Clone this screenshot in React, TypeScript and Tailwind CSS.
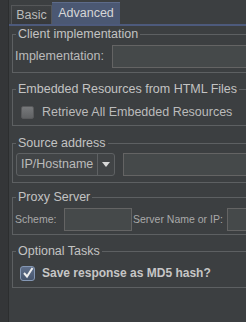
import React from "react";

function CheckBox({ checked }: { checked?: boolean }) {
  if (checked) {
    return (
      <span className="w-[15px] h-[15px] shrink-0 rounded-[3px] border border-[#8497b4] bg-linear-to-b from-[#5f6f8a] to-[#47556d] flex items-center justify-center">
        <svg width="12" height="12" viewBox="0 0 12 12">
          <path d="M2 6 L5 9.5 L10.5 1" stroke="#eeeeee" strokeWidth="2" fill="none" />
        </svg>
      </span>
    );
  }
  return (
    <span className="w-[13px] h-[13px] shrink-0 rounded-[2px] border border-[#58595b] bg-linear-to-b from-[#77797b] to-[#606264]" />
  );
}

function Group({ title, className, children }: { title: string; className?: string; children: React.ReactNode }) {
  return (
    <fieldset className={"ml-[3px] w-[262px] border border-[#5d6062] " + (className || "")}>
      <legend className="ml-[3px] px-[2px] text-[12.5px] leading-[15px] text-[#c3c3c3]">{title}</legend>
      {children}
    </fieldset>
  );
}

function Field({ className }: { className?: string }) {
  return <div className={"h-[23px] bg-[#45494a] border border-[#646464] " + (className || "")} />;
}

export default function App() {
  return (
    <div className="w-[246px] h-[322px] overflow-hidden bg-[#3c3f41] flex font-['Liberation_Sans',Arial,sans-serif]">
      <div className="w-[9px] shrink-0 bg-[#343638] border-r border-[#2c2e2f]" />
      <div className="flex-1 min-w-0 flex flex-col">
        {/* tabs */}
        <div className="h-[24px] flex items-end pl-[2px]">
          <div className="w-[41px] h-[19px] border border-b-0 border-[#555759] bg-linear-to-b from-[#3e4143] to-[#37393b] text-[12.5px] text-[#bbbbbb] flex items-center justify-center">
            Basic
          </div>
          <div className="w-[68px] h-[22px] bg-[#4b5873] border-t border-[#5d6b8a] text-[12.5px] text-[#d6d6d6] flex items-center justify-center">
            Advanced
          </div>
        </div>
        <div className="h-[2px] bg-[#4d5a7c]" />

        <Group title="Client implementation" className="mt-[1px]">
          <div className="flex items-center pt-[3px] pb-[4px] pl-[2px]">
            <span className="w-[97px] shrink-0 text-[12.5px] text-[#bbbbbb]">Implementation:</span>
            <Field className="flex-1" />
          </div>
        </Group>

        <Group title="Embedded Resources from HTML Files" className="mt-[9px]">
          <div className="h-[22px] mt-[4px] mb-[2px] pl-[8px] flex items-center gap-[8px]">
            <CheckBox />
            <span className="text-[12.5px] text-[#bbbbbb] whitespace-nowrap">Retrieve All Embedded Resources</span>
          </div>
        </Group>

        <Group title="Source address" className="mt-[10px]">
          <div className="flex items-center pt-[2px] pb-[6px] pl-[3px] gap-[8px]">
            <div className="w-[99px] h-[23px] shrink-0 flex border border-[#5e6163] rounded-[3px] bg-[#414446]">
              <span className="w-[80px] pl-[4px] text-[12.5px] leading-[21px] text-[#bbbbbb] whitespace-nowrap overflow-hidden">IP/Hostname</span>
              <span className="flex-1 border-l border-[#5e6163] flex items-center justify-center">
                <svg width="8" height="5" viewBox="0 0 8 5">
                  <path d="M0 0 H8 L4 5 Z" fill="#d8d8d8" />
                </svg>
              </span>
            </div>
            <Field className="flex-1" />
          </div>
        </Group>

        <Group title="Proxy Server" className="mt-[7px]">
          <div className="flex items-center pt-[3px] pb-[3px] pl-[2px]">
            <span className="w-[49px] shrink-0 text-[10.5px] text-[#a9a9a9]">Scheme:</span>
            <Field className="w-[68px] shrink-0" />
            <span className="w-[94px] shrink-0 ml-[1px] text-[10.5px] text-[#a9a9a9] whitespace-nowrap">Server Name or IP:</span>
            <Field className="flex-1" />
          </div>
        </Group>

        <Group title="Optional Tasks" className="mt-[9px]">
          <div className="h-[22px] mt-[3px] mb-[3px] pl-[7px] flex items-center gap-[7px]">
            <CheckBox checked />
            <span className="text-[12px] font-bold text-[#c6c6c6] whitespace-nowrap">Save response as MD5 hash?</span>
          </div>
        </Group>
      </div>
    </div>
  );
}
